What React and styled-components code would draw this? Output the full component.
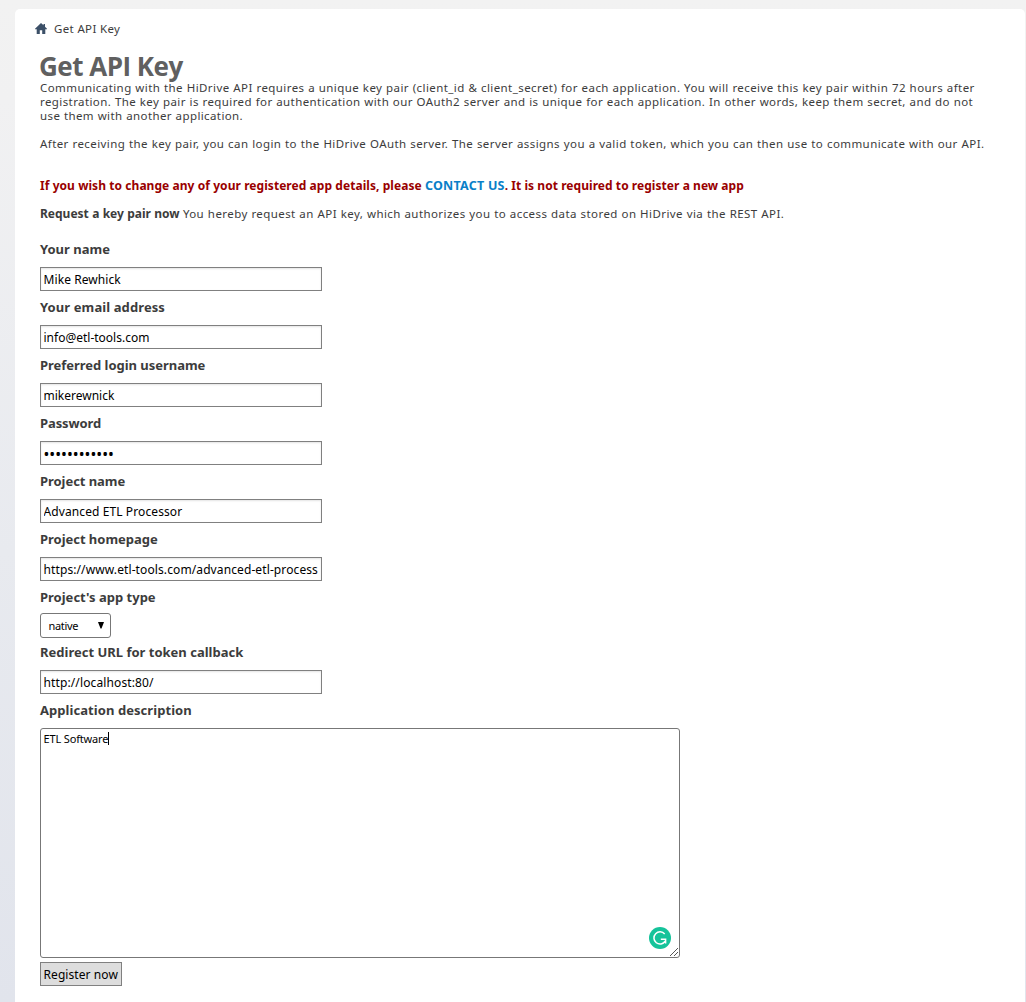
import React from "react";
import styled, { createGlobalStyle } from "styled-components";

const GlobalStyle = createGlobalStyle`
  * { box-sizing: border-box; }
  body {
    margin: 0;
    background: #f2f2f2;
    font-family: "Noto Sans", "Open Sans", sans-serif;
  }
`;

const Page = styled.div`
  display: flex;
  height: 1002px;
  padding: 9px 1px 0 15px;
  overflow: hidden;
  background: linear-gradient(180deg, #f2f2f2 0%, #f1f1f2 10%, #e8eaef 55%, #e1e4ec 100%);
`;

const Card = styled.main`
  flex: 1;
  padding: 12px 25px 0;
  background: #fff;
  border-radius: 5px 5px 0 0;
`;

const Breadcrumb = styled.nav`
  display: flex;
  align-items: center;
  gap: 7px;
  height: 14px;
  margin-left: -5px;
  font-size: 11.5px;
  color: #3c3c3c;
`;

const Line = styled.span`
  display: block;
  white-space: pre;
  letter-spacing: ${(p) => p.$track || 0}px;
  word-spacing: ${(p) => p.$word || 0}px;
`;

const Title = styled.h1`
  margin: 17px 0 1px -1px;
  height: 28px;
  font: 700 26px/28px "Open Sans", "Noto Sans", sans-serif;
  letter-spacing: -0.5px;
  color: #606060;
`;

const Paragraph = styled.p`
  margin: 0 0 ${(p) => p.$gap}px;
  font-size: 11.5px;
  line-height: 14px;
  color: #3c3c3c;
`;

const Notice = styled(Paragraph)`
  display: flex;
  font-size: 12px;
  font-weight: 700;
  color: #900;
`;

const Request = styled(Paragraph)`
  display: flex;
`;

const Strong = styled.b`
  font-size: 12px;
  white-space: pre;
  word-spacing: 0.2px;
`;

const ContactLink = styled.a`
  color: #0a80c8;
  font-size: 12.5px;
  letter-spacing: ${(p) => p.$track}px;
`;

const Field = styled.div`
  display: flex;
  flex-direction: column;
  align-items: flex-start;
  margin-bottom: ${(p) => p.$gap ?? 7}px;
`;

const Label = styled.label`
  height: 18px;
  margin-bottom: ${(p) => p.$gap ?? 9}px;
  font-size: 13px;
  font-weight: 700;
  line-height: 18px;
  white-space: nowrap;
  letter-spacing: ${(p) => p.$track || 0}px;
  color: #3c3c3c;
`;

const Input = styled.input`
  width: 282px;
  height: 24px;
  padding: 1px 2.5px 0;
  border: 1px solid #808080;
  border-radius: 0;
  outline: none;
  background: #fff;
  box-shadow: inset 0 1px 2px #e4e4e4;
  font: 12px "Noto Sans", sans-serif;
  font-size: ${(p) => (p.type === "password" ? 15.6 : 12)}px;
  letter-spacing: ${(p) => p.$track || 0}px;
  color: #000;
`;

const SelectBox = styled.div`
  display: flex;
  align-items: center;
  justify-content: space-between;
  width: 71px;
  height: 25px;
  padding: 0 6px 0 7.5px;
  border: 1px solid #777;
  border-radius: 3px;
  font-size: 11px;
  letter-spacing: -0.3px;
  color: #000;
`;

const Editor = styled.div`
  position: relative;
  display: flex;
  align-items: flex-start;
  width: 640px;
  height: 230px;
  padding: 2px 2.5px;
  border: 1px solid #777;
  border-radius: 3px;
  font-size: 11px;
  line-height: 15px;
  color: #000;
`;

const Caret = styled.i`
  width: 1px;
  height: 13px;
  margin-top: 1px;
  background: #000;
`;

const Badge = styled.svg`
  position: absolute;
  right: 8px;
  bottom: 8px;
`;

const Grip = styled.svg`
  position: absolute;
  right: 1px;
  bottom: 1px;
`;

const Submit = styled.button`
  display: flex;
  align-items: center;
  width: 82px;
  height: 24px;
  padding: 1px 2.5px 0;
  border: 1px solid #808080;
  background: #ddd;
  font: 12px "Noto Sans", sans-serif;
  letter-spacing: 0.08px;
  white-space: nowrap;
  color: #000;
`;

const fields = [
  { label: "Your name", value: "Mike Rewhick", track: 0.08 },
  { label: "Your email address", labelTrack: 0.1, value: "info@etl-tools.com" },
  { label: "Preferred login username", labelTrack: -0.03, value: "mikerewnick" },
  { label: "Password", labelTrack: -0.1, value: "abcdefghijkl", type: "password" },
  { label: "Project name", labelTrack: -0.05, value: "Advanced ETL Processor", track: 0.1 },
  { label: "Project homepage", labelTrack: -0.03, value: "https://www.etl-tools.com/advanced-etl-process", track: 0.105 },
];

function HomeIcon() {
  return (
    <svg width="12" height="11" viewBox="0 0 12 11" fill="#3c5068">
      <path d="M6 0 8.5 2.3V1H10v2.8L12 5.7V6.3H10.3V11H7.2V7.2H4.8V11H1.7V6.3H0V5.7z" />
    </svg>
  );
}

export default function App() {
  return (
    <>
      <GlobalStyle />
      <Page>
        <Card>
          <Breadcrumb>
            <HomeIcon />
            <Line $track={0.35}>Get API Key</Line>
          </Breadcrumb>
          <Title>Get API Key</Title>
          <Paragraph $gap={14}>
            <Line $track={0.42} $word={0.3}>Communicating with the HiDrive API requires a unique key pair (client_id &amp; client_secret) for each application. You will receive this key pair within 72 hours after</Line>
            <Line $track={0.405} $word={0.3}>registration. The key pair is required for authentication with our OAuth2 server and is unique for each application. In other words, keep them secret, and do not</Line>
            <Line $track={0.39} $word={0.3}>use them with another application.</Line>
          </Paragraph>
          <Paragraph $gap={28}>
            <Line $track={0.42} $word={0.3}>After receiving the key pair, you can login to the HiDrive OAuth server. The server assigns you a valid token, which you can then use to communicate with our API.</Line>
          </Paragraph>
          <Notice $gap={14}>
            <Line $track={0.05} $word={0.05}>If you wish to change any of your registered app details, please </Line>
            <ContactLink $track={0.24}>CONTACT US</ContactLink>
            <Line $track={0.05}>. It is not required to register a new app</Line>
          </Notice>
          <Request $gap={19}>
            <Strong>Request a key pair now </Strong>
            <Line $track={0.42} $word={0.3}>You hereby request an API key, which authorizes you to access data stored on HiDrive via the REST API.</Line>
          </Request>
          {fields.map((f) => (
            <Field key={f.label}>
              <Label $track={f.labelTrack}>{f.label}</Label>
              <Input type={f.type || "text"} defaultValue={f.value} $track={f.track} />
            </Field>
          ))}
          <Field $gap={5}>
            <Label $gap={7}>Project's app type</Label>
            <SelectBox>
              native
              <svg width="6" height="7" viewBox="0 0 6 7"><path d="M0 0h6L3.5 6.5h-1z" /></svg>
            </SelectBox>
          </Field>
          <Field>
            <Label>Redirect URL for token callback</Label>
            <Input defaultValue="http://localhost:80/" $track={0.12} />
          </Field>
          <Field $gap={4}>
            <Label $track={0.06}>Application description</Label>
            <Editor>
              <Line $track={-0.15}>ETL Software</Line>
              <Caret />
              <Badge width="22" height="22" viewBox="0 0 22 22" fill="none">
                <circle cx="11" cy="11" r="11" fill="#15c39a" />
                <path d="M15.7 7A6.1 6.1 0 1 0 16.2 14.2M11.8 12.2H16.6V16.5" stroke="#fff" strokeWidth="1.5" />
              </Badge>
              <Grip width="8" height="8" viewBox="0 0 8 8" stroke="#555">
                <path d="M0 8 8 0M4 8 8 4" />
              </Grip>
            </Editor>
          </Field>
          <Submit>Register now</Submit>
        </Card>
      </Page>
    </>
  );
}
